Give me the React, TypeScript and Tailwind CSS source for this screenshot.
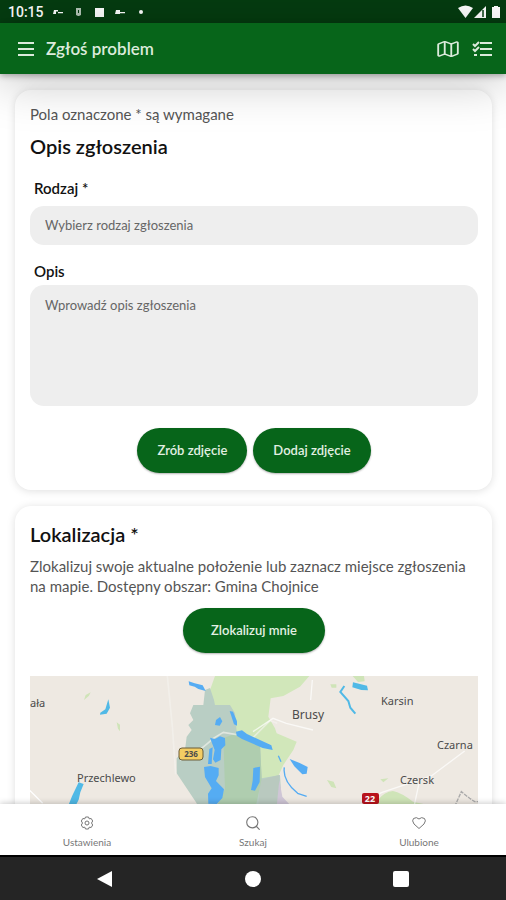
import type { ReactNode } from "react";
import { Menu, Map as MapIcon, Search } from "lucide-react";

function StatusBar() {
  return (
    <div className="flex h-[23px] shrink-0 items-center justify-between bg-[#053c10] pl-2 pr-1 text-white">
      <div className="flex items-center">
        <span className="w-11 font-[Roboto,sans-serif] text-sm font-medium">10:15</span>
        <svg width="100" height="12" viewBox="0 0 100 12" fill="currentColor" aria-hidden="true">
          <path d="M2 4h4v1.500H4V8H1zM6 6h5v1.200H6z" />
          <path d="M24 2h5v7l-2 1h-1l-2-1z" opacity=".7" />
          <path d="M26 4h1v3h-1z" fill="#053c10" />
          <path d="M43 2h9v9h-9z" />
          <path d="M64 4h4v4h-5zM68 6h5v1.200h-5z" />
          <circle cx="89" cy="6" r="2" />
        </svg>
      </div>
      <svg width="44" height="14" viewBox="0 0 44 14" fill="white" aria-hidden="true">
        <path d="M0 3Q7.500-2 15 3L7.500 13z" />
        <path d="M16 13L28 1v12z" />
        <path d="M25 5v7" stroke="#053c10" strokeWidth="1.500" />
        <path d="M36 1h4v1h2v11h-8V2h2z" />
      </svg>
    </div>
  );
}

function Header() {
  return (
    <header className="z-10 flex h-[51px] shrink-0 items-center bg-[#07651a] pl-4 pr-3.5 text-[#dcebdc] shadow-[0_2px_6px_rgba(0,0,0,0.3),0_6px_50px_rgba(0,0,0,0.25)]">
      <button type="button" aria-label="Menu">
        <svg width="20" height="16" viewBox="0 0 20 16" stroke="currentColor" strokeWidth="2">
          <path d="M2 2h16M2 8h16M2 14h16" />
        </svg>
      </button>
      <h1 className="ml-2.5 grow text-[17px] font-semibold">Zgłoś problem</h1>
      <button type="button" aria-label="Mapa" className="mr-3">
        <MapIcon size={24} strokeWidth={1.7} viewBox="1 0 22 24" preserveAspectRatio="none" className="h-5" />
      </button>
      <button type="button" aria-label="Lista">
        <svg width="20" height="18" viewBox="0 0 20 18" fill="none" stroke="currentColor" strokeWidth="2">
          <path d="M1 4l2 2 4-4M1 9l2 2 4-4M2 15h3M8 3h12M8 9h12M8 15h12" />
        </svg>
      </button>
    </header>
  );
}

function Card({ title, intro, children }: { title: string; intro?: string; children: ReactNode }) {
  return (
    <section className="rounded-2xl bg-white pr-3.5 pl-[15px] shadow-[0_1px_8px_rgba(0,0,0,0.13)]">
      {intro && <p className="pt-3.5 text-[15px] leading-5 text-[#555]">{intro}</p>}
      <h2 className={intro ? "pt-2.5 text-xl leading-6 font-semibold text-[#111]" : "pt-4 text-xl leading-6 font-semibold text-[#111]"}>
        {title}
      </h2>
      {children}
    </section>
  );
}

function PillButton({ children, wide = false }: { children: ReactNode; wide?: boolean }) {
  return (
    <button
      type="button"
      className={`h-[45px] rounded-full bg-[#07651a] text-[13px] font-semibold text-[#e2f0e2] shadow-[0_1px_2px_rgba(0,0,0,0.3)] ${wide ? "px-7" : "px-5"}`}
    >
      {children}
    </button>
  );
}

function LocationMap() {
  return (
    <svg
      role="img"
      aria-label="Mapa"
      className="block h-[200px] w-full bg-[#eee9e2]"
      viewBox="0 0 448 200"
      preserveAspectRatio="xMidYMid slice"
      fontFamily="'Noto Sans', sans-serif"
      fontSize="11"
      fill="#4b4b4b"
    >
      <rect width="448" height="200" fill="#eee9e2" />
      <g transform="translate(130 -6) scale(.33333)">
        <path d="M165 18H448L420 50 370 78 332 85 325 140 345 175 350 190 410 215 400 240 370 285 355 318 300 330 180 200 150 60Z" fill="#d1e7ba" />
        <path d="M135 60l15-6 12 36 3 15h45l15 25 5 55 70 35 5 105 55-10 5 85 20 230H130l-20-230-60-90v-45l25-25 5-40 15-20-10-15 15-15-10-20 10-25h30z" fill="#b9cec4" />
        <path d="M300 330l58-15-3 60 25 40v80h-90z" fill="#b9c9bf" />
        <path d="M358 330l-8 80h45l-28-30z" fill="#cfc6d6" />
        <path d="M190 205l38-15 72 32 5 104-20 95H165l30-65z" fill="#afcdaf" />
        <path d="M22 18l15 150 10 145M60 270q40-10 100-65l30-18 90 15 50-50 22 8" fill="none" stroke="#f5f3ee" strokeWidth="5" opacity=".65" />
        <g fill="#55acf3">
          <path d="M168 150l12-9 7 13-8 13-14-2z" />
          <path d="M150 203l15 4 15-8 15 5 1 22-12 12-2 32-16 8-7-10 5-28z" />
          <path d="M148 237l10-5-3 50h-11z" />
          <path d="M132 291l20-3 24 6v22l-8 17 24 25-5 26-17 18-25-1-1-30 11-16-20-34z" />
          <path d="M280 294l20-4-1 46-14 26-12-2 5-28z" />
          <path d="M228 185l18-4 15 11 73 34 4 14-30-6-62-27-16-10z" />
          <path d="M209 123l10 2 12 29v13l-9-4z" />
          <path d="M86 34l18 6 24 6 9 17-22-6-11-7-16-4z" />
          <path d="M389 267l30 12 24 12-3 20-13 2-24-24z" />
        </g>
        <path d="M355 257l8 18M373 292q-6 40 40 78l27 9" fill="none" stroke="#55acf3" strokeWidth="4" />
      </g>
      <g transform="translate(-30 -16) scale(.33333)">
        <path d="M325 118l5 25-10 18-20 3 1-6 15-10z" fill="#50b9e6" />
        <path d="M236 367l15 5-10 25-5 22-10 20-20 30-12-5 22-55z" fill="#50b9e6" />
        <path d="M252 120l5-15 15-8-5 10zM350 187l10 7v20l-6-8z" fill="#cfe4b8" />
        <path d="M88 390l40 40" stroke="#fff" strokeWidth="4" />
      </g>
      <g transform="translate(223 -16) scale(.33333)">
        <path d="M299 48h34l2 16-20 2zM232 73h18v10h-14zM382 358l24-3-15 12zM222 360l20 5 8 20-15-4zM375 420q20-26 45-27 25 5 60 32l90 20H330z" fill="#cfe4b8" />
        <path d="M300 67l42 10 3 14-20-1-27-8z" fill="#50b9e6" />
        <path d="M274 78l-12 18 24 27 6 20 15 18" fill="none" stroke="#50b9e6" strokeWidth="6" />
        <path d="M635 273l-100 75-150 50-80 45M0 215l60-40 40 15 80 20M178 60l-5 60M498 370l-15 70" fill="none" stroke="#fff" strokeWidth="4" opacity=".7" />
        <path d="M605 440l20-45 25 20 15 10 12 0" fill="none" stroke="#aaa" strokeWidth="4" strokeDasharray="12 3" />
      </g>
      <text x="0" y="31">ała</text>
      <text x="47" y="106">Przechlewo</text>
      <text x="262" y="43" fontSize="12">Brusy</text>
      <text x="351" y="29">Karsin</text>
      <text x="407" y="73">Czarna</text>
      <text x="370" y="108">Czersk</text>
      <rect x="149" y="72" width="24" height="12" rx="3" fill="#f4cd63" stroke="#6b5d38" />
      <text x="161" y="81" fontSize="8" fontWeight="700" textAnchor="middle">236</text>
      <rect x="332" y="117" width="17" height="11" rx="2" fill="#b8131c" />
      <text x="340" y="126" fontSize="9" fontWeight="700" textAnchor="middle" fill="#fff">22</text>
    </svg>
  );
}

function TabLink({ label, children }: { label: string; children: ReactNode }) {
  return (
    <a href="#" className="flex flex-1 flex-col items-center gap-1 pt-3 text-[10px] leading-4 text-[#777]">
      {children}
      {label}
    </a>
  );
}

function TabBar() {
  return (
    <nav className="z-10 flex h-[51px] shrink-0 bg-white px-1 shadow-[0_-1px_6px_rgba(0,0,0,0.2)]">
      <TabLink label="Ustawienia">
        <svg width="14" height="14" viewBox="0 0 14 14" fill="none" stroke="currentColor" strokeWidth="1">
          <path d="M5.500 1h3l.7 1.800 2-.3 1.500 2.500L11.500 7l1.200 2-1.500 2.500-2-.3-.7 1.800h-3l-.7-1.800-2 .3L1.300 9l1.200-2-1.200-2 1.500-2.500 2 .3z" />
          <circle cx="7" cy="7" r="2" />
        </svg>
      </TabLink>
      <TabLink label="Szukaj">
        <Search size={14} strokeWidth={1.6} viewBox="2 2 20 20" />
      </TabLink>
      <TabLink label="Ulubione">
        <svg width="14" height="14" viewBox="0 0 14 14" fill="none" stroke="currentColor" strokeWidth="1">
          <path d="M7 12.500L2 8Q-.5 4.500 1.500 2.500 4.500.5 7 3 9.500.5 12.500 2.500 14.500 4.500 12 8z" />
        </svg>
      </TabLink>
    </nav>
  );
}

function SystemBar() {
  return (
    <div className="flex h-[45px] shrink-0 items-center justify-around border-t-2 border-black bg-[#252525] px-[31px] text-white">
      <button type="button" aria-label="Wstecz">
        <svg width="16" height="18" viewBox="0 0 16 18" fill="currentColor"><path d="M0 9L15 1v16z" /></svg>
      </button>
      <button type="button" aria-label="Ekran główny" className="size-4 rounded-full bg-white" />
      <button type="button" aria-label="Ostatnie" className="size-4 rounded-xs bg-white" />
    </div>
  );
}

export default function App() {
  return (
    <div className="flex h-screen flex-col overflow-hidden bg-white font-[Lato,sans-serif]">
      <StatusBar />
      <Header />
      <main className="flex min-h-0 grow flex-col gap-4 overflow-y-auto pt-4 pr-3.5 pl-[15px] [scrollbar-width:none]">
        <Card intro="Pola oznaczone * są wymagane" title="Opis zgłoszenia">
          <label htmlFor="kind" className="mt-5 block pl-1 text-[15px] leading-5 font-semibold text-[#111]">
            Rodzaj *
          </label>
          <select
            id="kind"
            className="mt-2 block h-[39px] w-full appearance-none rounded-[14px] bg-[#eee] px-[15px] text-[13px] text-[#666]"
          >
            <option>Wybierz rodzaj zgłoszenia</option>
          </select>
          <label htmlFor="description" className="mt-4 block pl-1 text-[15px] leading-5 font-semibold text-[#111]">
            Opis
          </label>
          <textarea
            id="description"
            placeholder="Wprowadź opis zgłoszenia"
            className="mt-1 block h-[121px] w-full resize-none rounded-[14px] bg-[#eee] px-[15px] py-2.5 text-[13px] leading-5 placeholder:text-[#666]"
          />
          <div className="flex justify-center gap-1.5 pt-[22px] pb-[17px]">
            <PillButton>Zrób zdjęcie</PillButton>
            <PillButton>Dodaj zdjęcie</PillButton>
          </div>
        </Card>
        <Card title="Lokalizacja *">
          <p className="mt-2.5 text-[15px] leading-5 text-[#555]">
            Zlokalizuj swoje aktualne położenie lub zaznacz miejsce zgłoszenia na mapie. Dostępny obszar: Gmina Chojnice
          </p>
          <div className="flex justify-center pt-3 pb-[23px]">
            <PillButton wide>Zlokalizuj mnie</PillButton>
          </div>
          <LocationMap />
        </Card>
      </main>
      <TabBar />
      <SystemBar />
    </div>
  );
}
